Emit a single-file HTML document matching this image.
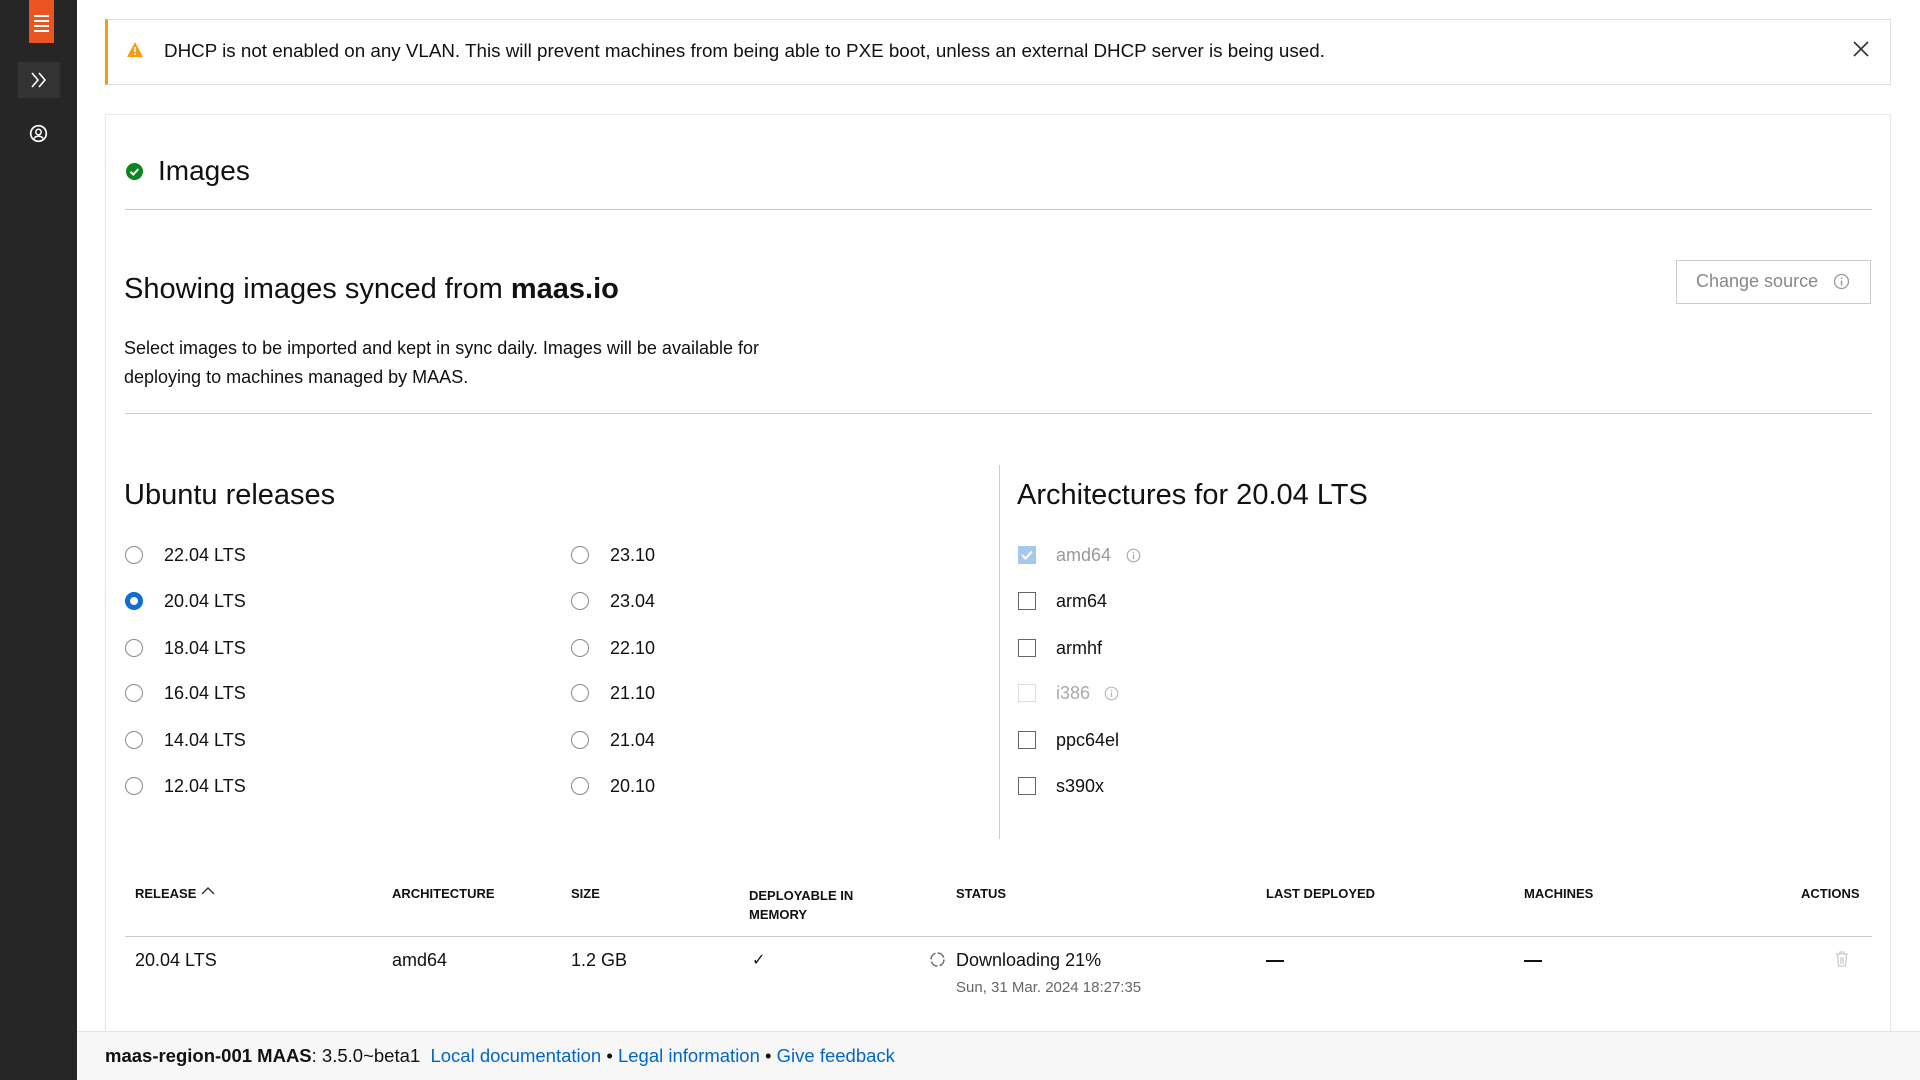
<!DOCTYPE html>
<html><head><meta charset="utf-8"><style>
*{box-sizing:border-box;margin:0;padding:0}
body{width:1920px;height:1080px;overflow:hidden;background:#fff;font-family:"Liberation Sans",sans-serif;color:#111;position:relative}
.abs{position:absolute}
.side{left:0;top:0;width:77px;height:1080px;background:#262626}
.t{position:absolute;white-space:nowrap}
.radio{position:absolute;width:18px;height:18px;border:1.5px solid #8a8a8a;border-radius:50%}
.radio.on{border:5px solid #0e6fd0;background:#fff}
.cb{position:absolute;width:18px;height:18px;border:1.5px solid #666}
.h{font-size:13px;font-weight:bold;color:#111;position:absolute;white-space:nowrap}
</style></head><body>
<div class="abs side"></div>
<div class="abs" style="left:29px;top:0;width:25px;height:43px;background:#e95420"></div>
<svg class="abs" style="left:33px;top:14px" width="17" height="22"><g stroke="#fff" stroke-width="2"><line x1="1" y1="2" x2="16" y2="2"/><line x1="1" y1="7" x2="16" y2="7"/><line x1="1" y1="12" x2="16" y2="12"/><line x1="1" y1="17" x2="16" y2="17"/></g></svg>
<div class="abs" style="left:18px;top:62px;width:42px;height:36px;background:#333"></div>
<svg class="abs" style="left:29px;top:70px" width="20" height="20"><path d="M3 3l6 7-6 7M10 3l6 7-6 7" stroke="#fff" stroke-width="1.6" fill="none"/></svg>
<svg class="abs" style="left:29px;top:124px" width="19" height="19"><circle cx="9.5" cy="9.5" r="7.8" stroke="#fff" stroke-width="1.7" fill="none"/><circle cx="9.5" cy="8" r="2.7" stroke="#fff" stroke-width="1.5" fill="none"/><path d="M5 14.5c1.5-3 7.5-3 9 0" stroke="#fff" stroke-width="1.5" fill="none"/></svg>

<div class="abs" style="left:105px;top:19px;width:1786px;height:66px;border:1px solid #ddd;border-left:3px solid #f99b11"></div>
<svg class="abs" style="left:127px;top:42px" width="16" height="15"><path d="M8 0L16 15H0Z" fill="#f99b11"/><rect x="7.2" y="5" width="1.6" height="5" fill="#fff"/><rect x="7.2" y="11.3" width="1.6" height="1.7" fill="#fff"/></svg>
<div class="t" style="left:164px;top:40px;font-size:18.8px">DHCP is not enabled on any VLAN. This will prevent machines from being able to PXE boot, unless an external DHCP server is being used.</div>
<svg class="abs" style="left:1853px;top:41px" width="16" height="16"><path d="M1 1L15 15M15 1L1 15" stroke="#333" stroke-width="1.6"/></svg>

<div class="abs" style="left:105px;top:114px;width:1786px;height:930px;border:1px solid #e8e8e8;box-shadow:0 1px 2px rgba(0,0,0,.05)"></div>
<svg class="abs" style="left:126px;top:163px" width="17" height="17"><circle cx="8.5" cy="8.5" r="8.5" fill="#0e8420"/><path d="M4.5 8.8l2.8 2.8 5-5.5" stroke="#fff" stroke-width="2" fill="none"/></svg>
<div class="t" style="left:158px;top:155px;font-size:28px;font-weight:300">Images</div>
<div class="abs" style="left:125px;top:209px;width:1747px;height:1px;background:#ccc"></div>
<div class="t" style="left:124px;top:273px;font-size:29px;font-weight:300">Showing images synced from <b style="font-weight:bold">maas.io</b></div>
<div class="abs" style="left:1676px;top:260px;width:195px;height:44px;border:1px solid #ccc"></div>
<div class="t" style="left:1696px;top:271px;font-size:18px;color:#888">Change source</div>
<svg class="abs" style="left:1833px;top:273px" width="17" height="17"><circle cx="8.5" cy="8.5" r="7" stroke="#999" stroke-width="1.3" fill="none"/><rect x="7.8" y="7.5" width="1.5" height="5" fill="#999"/><rect x="7.8" y="4.5" width="1.5" height="1.6" fill="#999"/></svg>
<div class="t" style="left:124px;top:334px;font-size:18px;line-height:29px;white-space:normal;width:700px">Select images to be imported and kept in sync daily. Images will be available for deploying to machines managed by MAAS.</div>
<div class="abs" style="left:125px;top:413px;width:1747px;height:1px;background:#ccc"></div>

<div class="t" style="left:124px;top:479px;font-size:29px;font-weight:300">Ubuntu releases</div>
<div class="abs" style="left:999px;top:465px;width:1px;height:374px;background:#ccc"></div>
<div class="t" style="left:1017px;top:479px;font-size:29px;font-weight:300">Architectures for 20.04 LTS</div>

<div class="radio" style="left:125px;top:546px"></div><div class="t" style="left:164px;top:545px;font-size:18px">22.04 LTS</div>
<div class="radio on" style="left:125px;top:592px"></div><div class="t" style="left:164px;top:591px;font-size:18px">20.04 LTS</div>
<div class="radio" style="left:125px;top:639px"></div><div class="t" style="left:164px;top:638px;font-size:18px">18.04 LTS</div>
<div class="radio" style="left:125px;top:684px"></div><div class="t" style="left:164px;top:683px;font-size:18px">16.04 LTS</div>
<div class="radio" style="left:125px;top:731px"></div><div class="t" style="left:164px;top:730px;font-size:18px">14.04 LTS</div>
<div class="radio" style="left:125px;top:777px"></div><div class="t" style="left:164px;top:776px;font-size:18px">12.04 LTS</div>

<div class="radio" style="left:571px;top:546px"></div><div class="t" style="left:610px;top:545px;font-size:18px">23.10</div>
<div class="radio" style="left:571px;top:592px"></div><div class="t" style="left:610px;top:591px;font-size:18px">23.04</div>
<div class="radio" style="left:571px;top:639px"></div><div class="t" style="left:610px;top:638px;font-size:18px">22.10</div>
<div class="radio" style="left:571px;top:684px"></div><div class="t" style="left:610px;top:683px;font-size:18px">21.10</div>
<div class="radio" style="left:571px;top:731px"></div><div class="t" style="left:610px;top:730px;font-size:18px">21.04</div>
<div class="radio" style="left:571px;top:777px"></div><div class="t" style="left:610px;top:776px;font-size:18px">20.10</div>

<div class="abs" style="left:1018px;top:546px;width:18px;height:18px;background:#a5c8ec"></div>
<svg class="abs" style="left:1018px;top:546px" width="18" height="18"><path d="M4 9l3.5 3.5L14 5.5" stroke="#fff" stroke-width="2" fill="none"/></svg>
<div class="t" style="left:1056px;top:545px;font-size:18px;color:#999">amd64</div>
<svg class="abs" style="left:1126px;top:548px" width="15" height="15"><circle cx="7.5" cy="7.5" r="6.3" stroke="#aaa" stroke-width="1.2" fill="none"/><rect x="6.8" y="6.5" width="1.4" height="4.5" fill="#aaa"/><rect x="6.8" y="3.8" width="1.4" height="1.5" fill="#aaa"/></svg>
<div class="cb" style="left:1018px;top:592px"></div><div class="t" style="left:1056px;top:591px;font-size:18px">arm64</div>
<div class="cb" style="left:1018px;top:639px"></div><div class="t" style="left:1056px;top:638px;font-size:18px">armhf</div>
<div class="cb" style="left:1018px;top:684px;border-color:#ddd"></div><div class="t" style="left:1056px;top:683px;font-size:18px;color:#aaa">i386</div>
<svg class="abs" style="left:1104px;top:686px" width="15" height="15"><circle cx="7.5" cy="7.5" r="6.3" stroke="#bbb" stroke-width="1.2" fill="none"/><rect x="6.8" y="6.5" width="1.4" height="4.5" fill="#bbb"/><rect x="6.8" y="3.8" width="1.4" height="1.5" fill="#bbb"/></svg>
<div class="cb" style="left:1018px;top:731px"></div><div class="t" style="left:1056px;top:730px;font-size:18px">ppc64el</div>
<div class="cb" style="left:1018px;top:777px"></div><div class="t" style="left:1056px;top:776px;font-size:18px">s390x</div>

<div class="h" style="left:135px;top:886px">RELEASE</div>
<svg class="abs" style="left:201px;top:886px" width="14" height="10"><path d="M1 8l6-6 6 6" stroke="#333" stroke-width="1.4" fill="none"/></svg>
<div class="h" style="left:392px;top:886px">ARCHITECTURE</div>
<div class="h" style="left:571px;top:886px">SIZE</div>
<div class="h" style="left:749px;top:886px;line-height:19px">DEPLOYABLE IN<br>MEMORY</div>
<div class="h" style="left:956px;top:886px">STATUS</div>
<div class="h" style="left:1266px;top:886px">LAST DEPLOYED</div>
<div class="h" style="left:1524px;top:886px">MACHINES</div>
<div class="h" style="left:1801px;top:886px">ACTIONS</div>
<div class="abs" style="left:125px;top:936px;width:1747px;height:1px;background:#ccc"></div>

<div class="t" style="left:135px;top:950px;font-size:18px">20.04 LTS</div>
<div class="t" style="left:392px;top:950px;font-size:18px">amd64</div>
<div class="t" style="left:571px;top:950px;font-size:18px">1.2 GB</div>
<div class="t" style="left:752px;top:950px;font-size:16px">✓</div>
<svg class="abs" style="left:929px;top:951px" width="17" height="17"><circle cx="8.5" cy="8.5" r="6.5" stroke="#666" stroke-width="1.5" fill="none" stroke-dasharray="8 2.2"/></svg>
<div class="t" style="left:956px;top:950px;font-size:18px">Downloading 21%</div>
<div class="t" style="left:956px;top:979px;font-size:15px;color:#666">Sun, 31 Mar. 2024 18:27:35</div>
<div class="abs" style="left:1266px;top:960px;width:18px;height:1.5px;background:#111"></div>
<div class="abs" style="left:1524px;top:960px;width:18px;height:1.5px;background:#111"></div>
<svg class="abs" style="left:1835px;top:950px" width="14" height="17"><path d="M1 4h12M5 4V2h4v2M2.5 4l1 12h7l1-12M6 7v7M8 7v7" stroke="#ccc" stroke-width="1.3" fill="none"/></svg>

<div class="abs" style="left:77px;top:1031px;width:1843px;height:49px;background:#f7f7f7;border-top:1px solid #e5e5e5"></div>
<div class="t" style="left:105px;top:1045px;font-size:18.5px"><span style="font-weight:bold">maas-region-001 MAAS</span>: 3.5.0~beta1&nbsp; <span style="color:#0066cc">Local documentation</span> • <span style="color:#0066cc">Legal information</span> • <span style="color:#0066cc">Give feedback</span></div>
</body></html>
